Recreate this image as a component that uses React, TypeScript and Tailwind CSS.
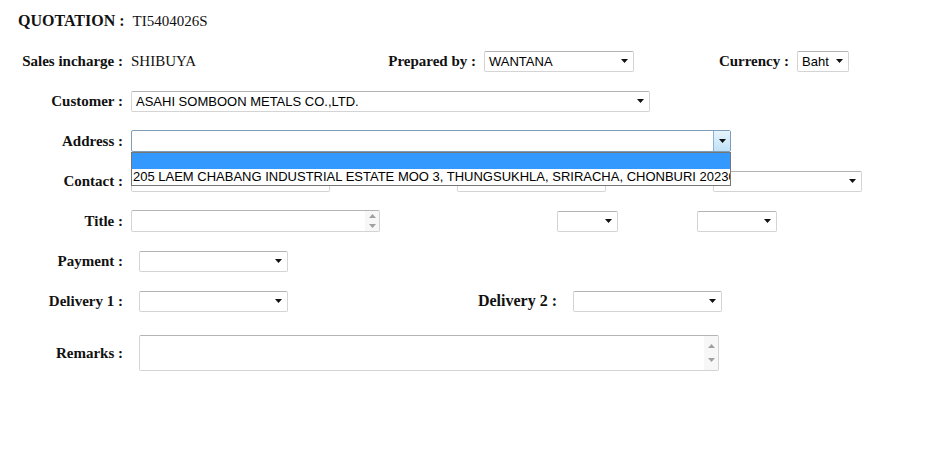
import React from "react";

const serif = "font-['Liberation_Serif',serif]";
const sans = "font-['Liberation_Sans',Arial,sans-serif]";

const Arrow = () => (
    <svg width="7" height="4" viewBox="0 0 7 4" className="shrink-0">
        <path d="M0 0h7L3.5 4z" fill="#111" />
    </svg>
);

// Scroll arrows used by the text areas
const Spinner = ({ tall }: { tall?: boolean }) => (
    <div className={`flex flex-col items-center justify-between w-[14px] h-full bg-[#f7f7f7] ${tall ? "py-[8px]" : "py-[3px]"}`}>
        <svg width="7" height="4" viewBox="0 0 7 4">
            <path d="M0 4h7L3.5 0z" fill="#a0a0a0" />
        </svg>
        <svg width="7" height="4" viewBox="0 0 7 4">
            <path d="M0 0h7L3.5 4z" fill="#a0a0a0" />
        </svg>
    </div>
);

const Select = ({ className, value }: { className: string; value?: string }) => (
    <div
        className={`flex shrink-0 items-center justify-between h-[21px] bg-white border border-[#d4d4d4] border-t-[#b4b4b4] rounded-[2px] pl-[4px] pr-[5px] text-[13px] text-black ${sans} ${className}`}
    >
        <span className="whitespace-nowrap leading-none">{value}</span>
        <Arrow />
    </div>
);

const Input = ({ className }: { className: string }) => (
    <div className={`shrink-0 h-[21px] bg-white border border-[#d4d4d4] border-t-[#b4b4b4] rounded-[2px] ${className}`} />
);

const Label = ({ children }: { children: React.ReactNode }) => (
    <div className={`w-[123px] shrink-0 text-right text-[15px] font-bold text-[#111] whitespace-nowrap ${serif}`}>
        {children}
    </div>
);

export default function App() {
    return (
        <div className="relative w-[933px] h-[459px] bg-white pt-px">
            {/* QUOTATION */}
            <div className="flex items-center h-10">
                <div className={`pl-[18px] text-[16px] font-bold text-[#111] ${serif}`}>QUOTATION :</div>
                <div className={`ml-[8px] text-[15px] text-[#111] ${serif}`}>TI5404026S</div>
            </div>

            {/* Sales incharge / Prepared by / Currency */}
            <div className="flex items-center h-10">
                <Label>Sales incharge :</Label>
                <div className="flex shrink-0 items-center justify-between w-[361px] pl-[8px] pr-[8px]">
                    <span className={`text-[15px] text-[#111] ${serif}`}>SHIBUYA</span>
                    <span className={`text-[15px] font-bold text-[#111] ${serif}`}>Prepared by :</span>
                </div>
                <Select className="w-[150px]" value="WANTANA" />
                <div className={`w-[163px] shrink-0 pr-[8px] text-right text-[15px] font-bold text-[#111] ${serif}`}>Currency :</div>
                <Select className="w-[52px]" value="Baht" />
            </div>

            {/* Customer */}
            <div className="flex items-center h-10">
                <Label>Customer :</Label>
                <Select className="ml-[8px] w-[519px]" value="ASAHI SOMBOON METALS CO.,LTD." />
            </div>

            {/* Address (open) */}
            <div className="flex items-center h-10">
                <Label>Address :</Label>
                <div className="relative ml-[8px] w-[600px] h-[22px]">
                    <div className="flex h-full bg-white border border-[#7f9db9] rounded-[2px]">
                        <div className="flex-1" />
                        <div className="flex items-center justify-center w-[17px] h-full border-l border-[#8ab3da] bg-gradient-to-b from-[#e6f4fc] to-[#bfe1f7]">
                            <Arrow />
                        </div>
                    </div>
                    {/* drop-down list */}
                    <div className={`absolute left-0 top-[22px] z-10 w-[600px] h-[34px] overflow-hidden bg-white border border-[#767676] text-[13px] text-black ${sans}`}>
                        <div className="h-[16px] bg-[#3399ff]" />
                        <div className="h-[16px] pl-[1px] leading-[16px] whitespace-nowrap">
                            205 LAEM CHABANG INDUSTRIAL ESTATE MOO 3, THUNGSUKHLA, SRIRACHA, CHONBURI 20230
                        </div>
                    </div>
                </div>
            </div>

            {/* Contact */}
            <div className="flex items-center h-10">
                <Label>Contact :</Label>
                <Input className="ml-[8px] w-[199px]" />
                <Input className="ml-[127px] w-[149px]" />
                <Select className="ml-[107px] w-[149px]" />
            </div>

            {/* Title */}
            <div className="flex items-center h-10">
                <Label>Title :</Label>
                <div className="flex shrink-0 ml-[8px] w-[249px] h-[22px] bg-white border border-[#d4d4d4] border-t-[#b4b4b4] rounded-[2px]">
                    <div className="flex-1" />
                    <Spinner />
                </div>
                <Select className="ml-[177px] w-[61px]" />
                <Select className="ml-[79px] w-[80px]" />
            </div>

            {/* Payment */}
            <div className="flex items-center h-10">
                <Label>Payment :</Label>
                <Select className="ml-[16px] w-[149px]" />
            </div>

            {/* Delivery */}
            <div className="flex items-center h-10">
                <Label>Delivery 1 :</Label>
                <Select className="ml-[16px] w-[149px]" />
                <div className={`w-[285px] shrink-0 pr-[16px] text-right text-[16px] font-bold text-[#111] ${serif}`}>Delivery 2 :</div>
                <Select className="w-[149px]" />
            </div>

            {/* Remarks */}
            <div className="flex items-center mt-[14px]">
                <Label>Remarks :</Label>
                <div className="flex shrink-0 ml-[16px] w-[580px] h-[36px] bg-white border border-[#d4d4d4] border-t-[#b4b4b4] rounded-[2px]">
                    <div className="flex-1" />
                    <Spinner tall />
                </div>
            </div>
        </div>
    );
}
